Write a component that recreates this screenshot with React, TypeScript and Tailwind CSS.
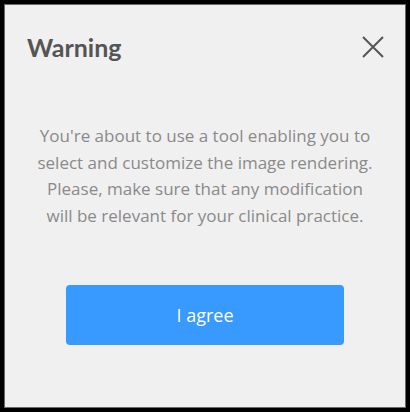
export default function App() {
  return (
    <div className="w-[410px] h-[412px] bg-black p-[4px]" style={{ fontFamily: '"Open Sans", "Noto Sans", sans-serif' }}>
      <div className="h-full border border-[#6a6a6a] bg-[#f0f0f0] flex flex-col">
        {/* Header */}
        <div className="flex items-center justify-between pl-[22px] pr-[20px] pt-[26px]">
          <h1 className="text-[25px] font-bold text-[#555555] leading-[32px]" style={{ fontFamily: 'Lato, "Open Sans", sans-serif' }}>
            Warning
          </h1>
          <button className="w-[24px] h-[24px] flex items-center justify-center text-[#555555]">
            <svg width="22" height="22" viewBox="0 0 22 22" fill="none" stroke="currentColor" strokeWidth="2">
              <path d="M1 1L21 21M21 1L1 21" />
            </svg>
          </button>
        </div>

        {/* Body */}
        <p className="mt-[60px] text-center text-[17px] leading-[26.5px] text-[#8a8a8a]">
          You're about to use a tool enabling you to
          <br />
          select and customize the image rendering.
          <br />
          Please, make sure that any modification
          <br />
          will be relevant for your clinical practice.
        </p>

        {/* Action */}
        <div className="flex justify-center mt-[56px]">
          <button className="w-[278px] h-[60px] rounded-[4px] bg-[#3899ff] text-white text-[18px]">
            I agree
          </button>
        </div>
      </div>
    </div>
  );
}
